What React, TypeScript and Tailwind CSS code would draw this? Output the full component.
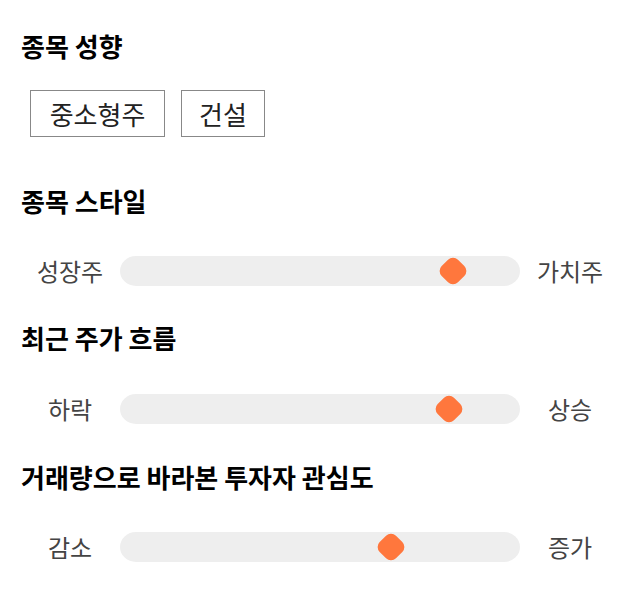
import React from "react";

const font = { fontFamily: '"Noto Sans CJK KR", "Noto Sans", sans-serif' };

interface SliderRowProps {
  left: string;
  right: string;
  value: number;
}

const SliderRow: React.FC<SliderRowProps> = ({ left, right, value }) => {
  return (
    <div className="flex h-[30px] items-center px-[20px]">
      <span className="w-[100px] text-center text-[24px] leading-[30px] text-[#444]">{left}</span>
      <div className="relative h-[30px] w-[400px] rounded-[16px/15px] bg-[#eeeeee]">
        {/* thumb */}
        <div
          className="absolute top-1/2 -translate-x-1/2 -translate-y-1/2"
          style={{ left: `${value}%` }}
        >
          <div className="h-[23px] w-[23px] rotate-45 rounded-[7px] bg-[#ff773d]" />
        </div>
      </div>
      <span className="w-[100px] text-center text-[24px] leading-[30px] text-[#444]">{right}</span>
    </div>
  );
};

const Heading: React.FC<{ children: React.ReactNode; className?: string }> = ({ children, className }) => (
  <h2 className={`px-[21px] text-[26px] font-bold leading-[36px] text-black ${className ?? ""}`}>{children}</h2>
);

export default function App() {
  return (
    <div className="w-[640px] bg-white pt-[28px] pb-6" style={font}>
      {/* 종목 성향 */}
      <Heading>종목 성향</Heading>
      <div className="mt-[26px] flex gap-[16px] px-[30px]">
        <span className="w-[135px] border border-[#888] py-[5px] text-center text-[26px] leading-[35px] text-[#222]">
          중소형주
        </span>
        <span className="w-[84px] border border-[#888] py-[5px] text-center text-[26px] leading-[35px] text-[#222]">
          건설
        </span>
      </div>

      <Heading className="mt-[46px]">종목 스타일</Heading>
      <div className="mt-[37px]">
        <SliderRow left="성장주" right="가치주" value={83.25} />
      </div>

      <Heading className="mt-[34px]">최근 주가 흐름</Heading>
      <div className="mt-[38px]">
        <SliderRow left="하락" right="상승" value={82.25} />
      </div>

      <Heading className="mt-[35px]">거래량으로 바라본 투자자 관심도</Heading>
      <div className="mt-[37px]">
        <SliderRow left="감소" right="증가" value={67.75} />
      </div>
    </div>
  );
}
